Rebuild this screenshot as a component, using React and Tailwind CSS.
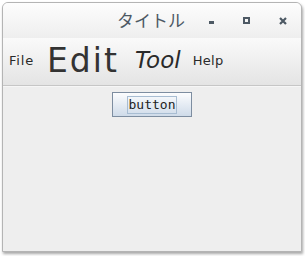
import React from 'react';

export default function App() {
  return (
    <div className="w-[305px] h-[256px] bg-white pt-[2px] pl-[2px]">
      <div className="w-[300px] h-[250px] flex flex-col rounded-t-[6px] border border-[#b4b4b4] bg-[#eeeeee] shadow-[1px_2px_3px_rgba(0,0,0,0.35)] overflow-hidden">
        {/* Title bar */}
        <div className="h-[35px] flex items-center bg-gradient-to-b from-[#fdfdfd] to-[#eeeeee] font-['DejaVu_Sans','Noto_Sans_CJK_JP',sans-serif] text-[#4d5964]">
          <span className="ml-[114px] w-[68px] text-[17px] leading-none pt-[1px]">タイトル</span>
          <span className="ml-[19px] w-[14px] flex justify-center pt-[3px]">
            <span className="block w-[5px] h-[3px] bg-[#4d5964]" />
          </span>
          <span className="ml-[21px] w-[14px] flex justify-center">
            <span className="block w-[7px] h-[7px] border-2 border-[#4d5964]" />
          </span>
          <span className="ml-[23px] w-[14px] flex justify-center">
            <svg width="8" height="8" viewBox="0 0 8 8">
              <path d="M1 1 L7 7 M7 1 L1 7" stroke="#4d5964" strokeWidth="2.2" />
            </svg>
          </span>
        </div>
        {/* Menu bar */}
        <div className="h-[48px] pb-[2px] flex items-center bg-gradient-to-b from-[#fafafa] to-[#e4e4e4] border-b border-[#c6c6c6] font-['DejaVu_Sans',sans-serif] text-[#2a2a2a]">
          <span className="ml-[6px] text-[13px] tracking-[0.8px] mt-[1px]">File</span>
          <span className="ml-[13px] text-[33px] tracking-[2px] leading-none text-[#333]">Edit</span>
          <span className="ml-[16px] text-[23px] italic leading-none">Tool</span>
          <span className="ml-[12px] text-[13px] tracking-[0.3px] mt-[1px]">Help</span>
        </div>
        <div className="border-t border-[#f6f6f6]" />
        {/* Content */}
        <div className="flex justify-center pt-[5px]">
          <button className="w-[80px] h-[25px] flex items-center justify-center border border-[#7d8da0] bg-gradient-to-b from-[#fcfdfe] to-[#cfdbe9]">
            <span className="px-[1px] border border-[#a8bdd2] font-['DejaVu_Sans_Mono',monospace] text-[13px] leading-[16px] text-[#222]">button</span>
          </button>
        </div>
      </div>
    </div>
  );
}
